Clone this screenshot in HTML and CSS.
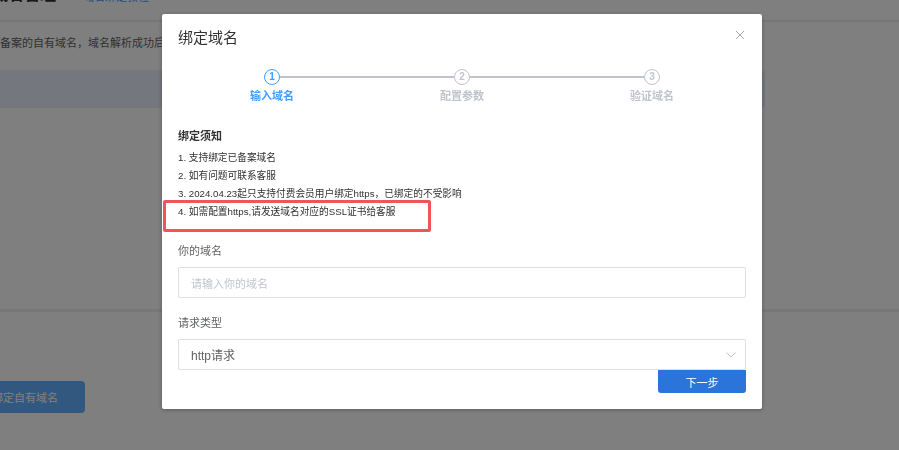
FILE: index.html
```html
<!DOCTYPE html>
<html>
<head>
    <meta charset="UTF-8">
    <title>域名管理</title>
    <link rel="stylesheet" href="styles.css">
</head>
<body>
    <!-- 背景页面 -->
    <div class="page">
        <div class="page-head">
            <span class="page-title">域名管理</span>
            <a class="page-link" href="#">域名绑定教程</a>
        </div>
        <div class="page-desc">支持绑定已备案的自有域名，域名解析成功后</div>
        <div class="table-head"></div>
        <div class="table-body"></div>
        <button class="bind-btn">绑定自有域名</button>
    </div>

    <div class="mask"></div>

    <!-- 绑定域名弹窗 -->
    <div class="dialog">
        <div class="dialog-header">
            <span class="dialog-title">绑定域名</span>
            <span class="dialog-close">
                <svg width="10" height="10" viewBox="0 0 10 10">
                    <path d="M1 1 L9 9 M9 1 L1 9" stroke="#a8abb2" stroke-width="1" fill="none"/>
                </svg>
            </span>
        </div>

        <div class="steps">
            <span class="step-icon active">1</span>
            <span class="step-line"></span>
            <span class="step-icon">2</span>
            <span class="step-line"></span>
            <span class="step-icon">3</span>
        </div>
        <div class="step-titles">
            <span class="active">输入域名</span>
            <span>配置参数</span>
            <span>验证域名</span>
        </div>

        <div class="notice">
            <div class="notice-title">绑定须知</div>
            <ul class="notice-list">
                <li>1. 支持绑定已备案域名</li>
                <li>2. 如有问题可联系客服</li>
                <li>3. 2024.04.23起只支持付费会员用户绑定https，已绑定的不受影响</li>
                <li>4. 如需配置https,请发送域名对应的SSL证书给客服</li>
            </ul>
        </div>

        <div class="form">
            <div class="form-item first">
                <label>你的域名</label>
                <div class="input"><span class="placeholder">请输入你的域名</span></div>
            </div>
            <div class="form-item">
                <label>请求类型</label>
                <div class="input select">
                    <span>http请求</span>
                    <svg width="10" height="6" viewBox="0 0 10 6">
                        <path d="M0.5 0.5 L5 5 L9.5 0.5" stroke="#c0c4cc" stroke-width="1" fill="none"/>
                    </svg>
                </div>
            </div>
            <div class="form-footer">
                <button class="next-btn">下一步</button>
            </div>
        </div>

        <!-- 截图标注框 -->
        <div class="mark-box"></div>
    </div>
</body>
</html>
```

FILE: styles.css
```css
* {
    box-sizing: border-box;
    margin: 0;
    padding: 0;
}

body {
    width: 899px;
    height: 450px;
    overflow: hidden;
    background: #fff;
    font-family: "Liberation Sans", "Noto Sans CJK SC", sans-serif;
}

/* 背景页面 */
.page {
    width: 899px;
}

.page-head {
    height: 22px;
    border-bottom: 2px solid #ececec;
    display: flex;
    align-items: flex-start;
}

.page-title {
    font-size: 16px;
    font-weight: bold;
    color: #303133;
    line-height: 16px;
    margin: -13px 0 0 -8px;
}

.page-link {
    font-size: 11px;
    color: #409eff;
    text-decoration: none;
    line-height: 12px;
    margin: -9px 0 0 27px;
}

.page-desc {
    margin: 13px 0 0 -55px;
    font-size: 11px;
    line-height: 16px;
    color: #606266;
    white-space: nowrap;
}

.table-head {
    margin-top: 19px;
    width: 765px;
    height: 38px;
    background: #e9eefb;
    border-radius: 0 4px 4px 0;
}

.table-body {
    height: 204px;
    border-bottom: 3px solid #efefef;
}

.bind-btn {
    margin: 69px 0 0 -20px;
    width: 105px;
    height: 32px;
    padding-left: 12px;
    border: none;
    border-radius: 0 4px 4px 0;
    background: #66b1ff;
    color: #fff;
    font-family: inherit;
    font-size: 11px;
    text-align: left;
}

.mask {
    position: fixed;
    left: 0;
    top: 0;
    right: 0;
    bottom: 0;
    background: rgba(0, 0, 0, 0.5);
}

/* 弹窗 */
.dialog {
    position: fixed;
    left: 162px;
    top: 14px;
    width: 600px;
    height: 395px;
    background: #fff;
    border-radius: 2px;
    box-shadow: 0 1px 4px rgba(0, 0, 0, 0.3);
}

.dialog-header {
    position: relative;
    padding: 14px 16px 0;
}

.dialog-title {
    display: block;
    font-size: 15px;
    line-height: 20px;
    color: #303133;
}

.dialog-close {
    position: absolute;
    right: 17px;
    top: 16px;
    line-height: 0;
}

.steps {
    margin: 21px 102px 0;
    display: flex;
    align-items: center;
}

.step-icon {
    width: 16px;
    height: 16px;
    border: 1.5px solid #c0c4cc;
    border-radius: 50%;
    color: #c0c4cc;
    font-size: 10px;
    font-weight: bold;
    line-height: 13px;
    text-align: center;
}

.step-icon.active {
    border-color: #409eff;
    color: #409eff;
}

.step-line {
    flex: 1;
    height: 2px;
    background: #c0c4cc;
}

.step-titles {
    margin: 4px 15px 0;
    display: grid;
    grid-template-columns: repeat(3, 1fr);
    text-align: center;
    font-size: 11px;
    font-weight: bold;
    line-height: 14px;
    color: #c0c4cc;
}

.step-titles .active {
    color: #409eff;
}

.notice {
    margin-top: 26px;
    padding: 0 16px;
    color: #303133;
}

.notice-title {
    font-size: 11px;
    font-weight: bold;
    line-height: 14px;
}

.notice-list {
    list-style: none;
    margin-top: 6px;
    font-size: 9.7px;
    line-height: 18px;
}

.form {
    padding: 0 16px;
}

.form-item {
    margin-top: 17px;
}

.form-item.first {
    margin-top: 22px;
}

.form-item label {
    display: block;
    font-size: 11px;
    line-height: 16px;
    color: #606266;
    margin-bottom: 8px;
}

.input {
    height: 31px;
    border: 1px solid #dcdfe6;
    border-radius: 2px;
    padding: 0 12px;
    display: flex;
    align-items: center;
    font-size: 12px;
    color: #606266;
}

.placeholder {
    font-size: 11px;
    color: #c0c4cc;
}

.select {
    justify-content: space-between;
    padding-right: 9px;
}

.form-footer {
    display: flex;
    justify-content: flex-end;
}

.next-btn {
    width: 88px;
    height: 23px;
    border: none;
    border-radius: 0 0 3px 3px;
    background: #2b74da;
    color: #fff;
    font-family: inherit;
    font-size: 11px;
}

.mark-box {
    position: absolute;
    left: 1px;
    top: 186px;
    width: 268px;
    height: 32px;
    border: 3px solid #f25555;
    border-radius: 2px;
}
```
